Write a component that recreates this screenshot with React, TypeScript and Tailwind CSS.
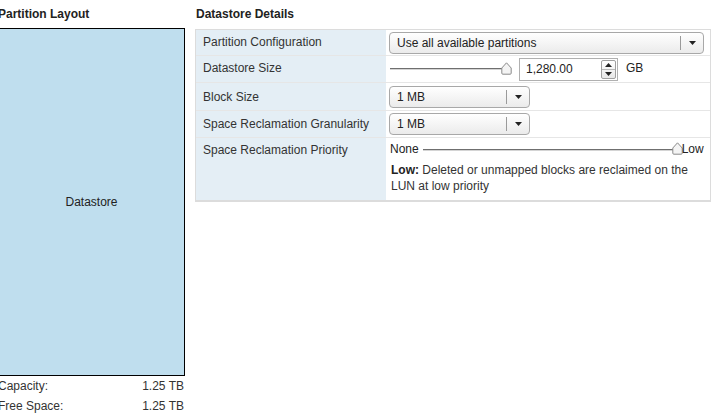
import React from "react";

function Thumb() {
  return (
    <svg width="11" height="13" viewBox="0 0 11 13" className="block">
      <path d="M5.5 0.8 L10.2 6 L10.2 11.2 Q10.2 12.2 9.2 12.2 L1.8 12.2 Q0.8 12.2 0.8 11.2 L0.8 6 Z" fill="#f4f4f4" stroke="#8a8a8a" strokeWidth="1" />
    </svg>
  );
}

function Track({ w }: { w: number }) {
  return (
    <div className="flex flex-col" style={{ width: w }}>
      <div className="h-px bg-[#6f6f6f]" />
      <div className="h-px bg-[#d4d4d4]" />
    </div>
  );
}

function Select({ label, width }: { label: string; width: string }) {
  return (
    <div className={`flex h-[22px] ${width} items-center rounded-[4px] border border-[#a8a8a8] bg-gradient-to-b from-white to-[#ebebeb] text-[#222]`}>
      <span className="flex-1 pl-[7px] leading-none">{label}</span>
      <div className="h-[14px] w-px bg-[#9a9a9a]" />
      <div className="flex w-[22px] items-center justify-center">
        <svg width="7" height="4" viewBox="0 0 7 4"><path d="M0 0 L7 0 L3.5 4 Z" fill="#222" /></svg>
      </div>
    </div>
  );
}

export default function App() {
  return (
    <div className="h-[413px] w-[713px] overflow-hidden bg-white text-[12px] text-[#333]" style={{ fontFamily: '"Liberation Sans", Arial, sans-serif' }}>
      <div className="flex pt-[7px]">
        <div className="-ml-[2px] w-[187px] shrink-0">
          <div className="h-[21px] font-bold leading-[14px] text-[#222]">Partition Layout</div>
          <div className="flex h-[348px] items-center justify-center border border-black bg-[#bfdeee] text-[#222]">Datastore</div>
          <div className="flex h-[20px] items-center justify-between pr-[1px]"><span>Capacity:</span><span>1.25 TB</span></div>
          <div className="flex h-[20px] items-center justify-between pr-[1px]"><span>Free Space:</span><span>1.25 TB</span></div>
        </div>
        <div className="ml-[10px] w-[516px] shrink-0">
          <div className="h-[22px] pl-[1px] font-bold leading-[14px] text-[#222]">Datastore Details</div>
          <div className="border border-b-2 border-[#dcdcdc]">
            <div className="flex h-[26px] border-b border-[#e6e6e6]">
              <div className="flex w-[190px] items-center bg-[#e4eef5] pb-[2px] pl-[7px]">Partition Configuration</div>
              <div className="flex flex-1 items-center pl-[3px]">
                <Select label="Use all available partitions" width="w-[315px]" />
              </div>
            </div>
            <div className="flex h-[27px] border-b border-[#e6e6e6]">
              <div className="flex w-[190px] items-center bg-[#e4eef5] pb-[2px] pl-[7px]">Datastore Size</div>
              <div className="flex flex-1 items-center pl-[4px]">
                <Track w={112} />
                <div className="-ml-[1px] mb-[2px]"><Thumb /></div>
                <div className="ml-[7px] flex h-[23px] w-[99px] items-center border border-[#b0b0b0] bg-white">
                  <span className="flex-1 pl-[6px] text-[#222]">1,280.00</span>
                  <div className="mr-[1px] flex h-[19px] w-[15px] flex-col rounded-[2px] border border-[#a0a0a0] bg-gradient-to-b from-white to-[#e8e8e8]">
                    <div className="flex flex-1 items-center justify-center border-b border-[#b8b8b8]">
                      <svg width="7" height="4" viewBox="0 0 7 4"><path d="M0 4 L7 4 L3.5 0 Z" fill="#222" /></svg>
                    </div>
                    <div className="flex flex-1 items-center justify-center">
                      <svg width="7" height="4" viewBox="0 0 7 4"><path d="M0 0 L7 0 L3.5 4 Z" fill="#222" /></svg>
                    </div>
                  </div>
                </div>
                <span className="mb-[2px] ml-[8px] text-[#222]">GB</span>
              </div>
            </div>
            <div className="flex h-[28px] border-b border-[#e6e6e6]">
              <div className="flex w-[190px] items-center bg-[#e4eef5] pl-[7px]">Block Size</div>
              <div className="flex flex-1 items-center pl-[3px]">
                <Select label="1 MB" width="w-[141px]" />
              </div>
            </div>
            <div className="flex h-[27px] border-b border-[#e6e6e6]">
              <div className="flex w-[190px] items-center bg-[#e4eef5] pl-[7px]">Space Reclamation Granularity</div>
              <div className="flex flex-1 items-center pl-[3px]">
                <Select label="1 MB" width="w-[141px]" />
              </div>
            </div>
            <div className="flex h-[62px]">
              <div className="w-[190px] bg-[#e4eef5] pl-[7px] pt-[3px]">Space Reclamation Priority</div>
              <div className="flex-1 pl-[4px] pt-[4px]">
                <div className="flex h-[14px] items-center">
                  <span className="text-[#222]">None</span>
                  <div className="ml-[4px] mt-[2px]"><Track w={250} /></div>
                  <div className="-ml-[1px] mb-[1px]"><Thumb /></div>
                  <span className="ml-[-1px] text-[#222]">Low</span>
                </div>
                <div className="mt-[6px] pl-[1px] leading-[16px]">
                  <span className="font-bold text-[#222]">Low:</span> Deleted or unmapped blocks are reclaimed on the
                  <br />LUN at low priority
                </div>
              </div>
            </div>
          </div>
        </div>
      </div>
    </div>
  );
}
